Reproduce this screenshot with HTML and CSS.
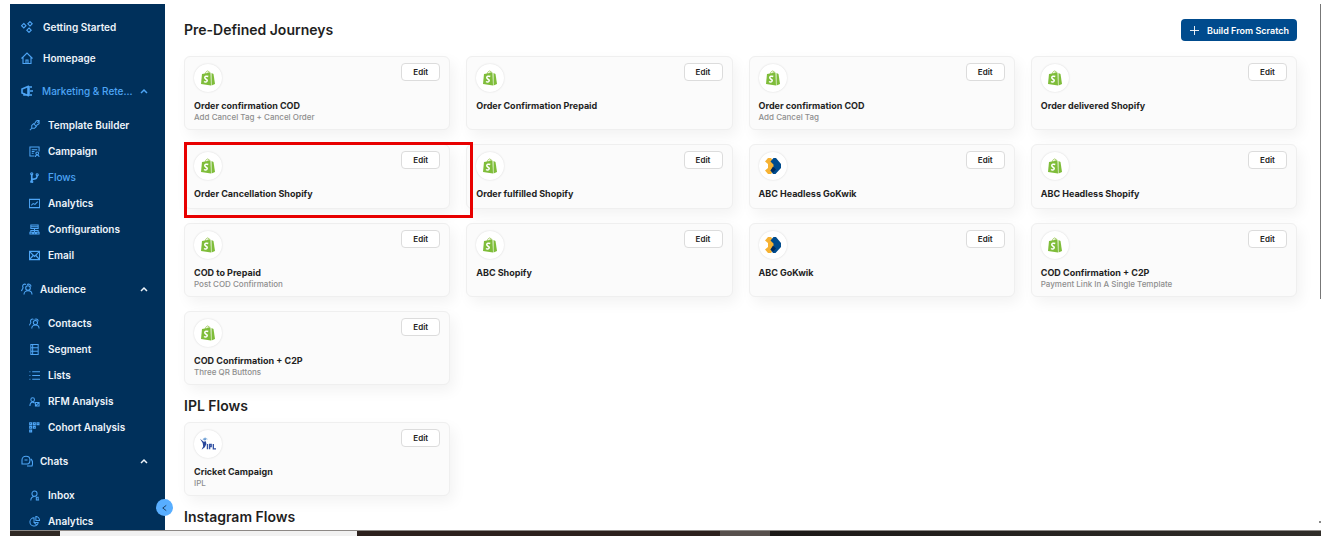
FILE: index.html
```html
<!DOCTYPE html>
<html lang="en">
<head>
<meta charset="utf-8">
<title>Pre-Defined Journeys</title>
<link rel="stylesheet" href="styles.css">
</head>
<body>
<svg class="sprite" aria-hidden="true">
  <symbol id="shopify" viewBox="0 0 28 32">
    <path fill="none" stroke="#a9cf6b" stroke-width="2" d="M8 9C9 4 12 1 14 2s3 3 3 7M12 9c1-4 3-6 5-5"/>
    <path fill="#7fbd3a" d="M2 8l17-3 1 26L0 28z"/>
    <path fill="#7fbd3a" d="M21 6l4 2 3 20-7 3z"/>
    <path fill="none" stroke="#fff" stroke-width="3" d="M14.500 13c-3-1.500-7-.5-7 2.500 0 3 5.500 3 5 6-.5 3-4.500 3-6.500 1.500"/>
  </symbol>
  <symbol id="gokwik" viewBox="0 0 32 32">
    <path fill="#f6b233" d="M6 0h6l6 8v17l-6 7H6l-6-7 6-5v-8L0 7z"/>
    <path fill="#004b8d" d="M17 0h5l10 12v8L21 32h-5l-5-7 6-6v-6l-6-6z"/>
    <path fill="#00295c" d="M16 17l6 6-6 6-5-4z"/>
  </symbol>
  <symbol id="ipl" viewBox="0 0 30 24">
    <circle cx="9" cy="3" r="2.500" fill="#6d9ed4"/>
    <path fill="none" stroke="#8db4dd" stroke-width="1.500" d="M5 4l5-3 4 2"/>
    <path fill="#27469b" d="M0 2l7 6 4-1 1 5-3 6-6 5 3-7-1-6z"/>
    <path fill="none" stroke="#3453a4" stroke-width="2.500" d="M14 12v10M18 22V13h3v4h-3M25 12v9h5"/>
  </symbol>
  <symbol id="up" viewBox="0 0 8 8"><path d="M1 6l3-3 3 3"/></symbol>
  <symbol id="diamonds" viewBox="0 0 12 12"><path d="M2.800 2.500l2.200 2.200-2.200 2.200L.6 4.700zM9 .6l2.200 2.200L9 5 6.800 2.800zM8 7l2.200 2.200L8 11.400 5.800 9.200z"/></symbol>
  <symbol id="home" viewBox="0 0 12 12"><path d="M.5 6.500L6 1l5.500 5.500M2 5.500v6h8v-6M5 11V8h2v3"/></symbol>
  <symbol id="horn" viewBox="0 0 12 12"><path stroke-width="1.600" d="M1 4v4l6 2.500v-9zM3 8v2h2M9 2h2M9 6h3M9 10h2M8 1v10"/></symbol>
  <symbol id="builder" viewBox="0 0 12 12"><path d="M1 11l2-2M3 9V6l2-2 3 3-2 2zM6 4l2-3 3-1v4L8 6M9 3l2-2"/></symbol>
  <symbol id="campaign" viewBox="0 0 12 12"><path d="M6 11H1V1h10v5M3 4h6M3 6h3M3 8h2M7 12c0-3 4-3 4 0"/><circle cx="9" cy="8" r="1.500"/></symbol>
  <symbol id="flow" viewBox="0 0 12 12"><path stroke-width="1.800" d="M3 2v9M3 8c5 0 6-1 6-5"/><circle cx="3" cy="2" r="1.200"/><circle cx="3" cy="10.500" r="1.200"/><circle cx="9" cy="3" r="1.200"/></symbol>
  <symbol id="chart" viewBox="0 0 12 12"><path d="M.5 1.500h11v9H.5zM2.500 8l2-2 2 1 3-3"/></symbol>
  <symbol id="config" viewBox="0 0 12 12"><path d="M2 1h8v4H2zM2 3h8M6 5v2M2 9V7h8v2M1 9h3v2H1zM5 9h2v2H5zM8 9h3v2H8zM6 7v2"/></symbol>
  <symbol id="mail" viewBox="0 0 12 12"><path stroke-width="1.300" d="M.5 1.500h11v9H.5zM.5 1.500L6 7l5.500-5.500M.5 10.500L4.500 6M11.500 10.500L7.500 6"/></symbol>
  <symbol id="people" viewBox="0 0 12 12"><circle cx="7" cy="5" r="2.300"/><path d="M3 11.500c0-5 8-5 8 0M5 1.500C3 .5 1 2 2 4.500 2.500 5 1 6 .5 8M6 1.500c2-1 4 0 4 2"/></symbol>
  <symbol id="segment" viewBox="0 0 12 12"><path d="M2 .5h8v11H2zM2 4h8M2 8h8M4 1v10"/></symbol>
  <symbol id="list" viewBox="0 0 12 12"><path d="M3.500 2H12M3.500 6H12M3.500 10H12M.5 2h1M.5 6h1M.5 10h1"/></symbol>
  <symbol id="rfm" viewBox="0 0 12 12"><circle cx="4" cy="4" r="2"/><path d="M1 11c0-5 4-5 5-3M7 7h4v4H7zM7 11l4-4"/></symbol>
  <symbol id="cohort" viewBox="0 0 12 12"><path stroke-width="1.300" d="M.8.8h2v2h-2zM4.800.8h2v2h-2zM8.800.8h2v2h-2zM.8 4.800h2v2h-2zM4.800 4.800h2v2h-2zM.8 8.800h2v2h-2z"/></symbol>
  <symbol id="chat" viewBox="0 0 12 12"><path d="M1 9V5c0-5 8-5 8 0s-3 4-8 4zM10 4c2 2 2 4 1 7H6M3.500 5h3"/></symbol>
  <symbol id="inbox" viewBox="0 0 12 12"><circle cx="6" cy="4" r="2.800"/><path d="M2 11.500C2 8 4 7 6 7M8 8h2v3H8zM8 11h3"/></symbol>
  <symbol id="pie" viewBox="0 0 12 12"><path d="M5.500 2a4.500 4.500 0 1 0 4.500 5H5.500zM7.500.5v4.500h4c0-3-2-4.500-4-4.500zM5.500 7l3 3"/></symbol>
</svg>

<div class="app">
  <aside class="sidebar">
    <nav class="menu">
      <a class="item" href="#"><svg class="icon"><use href="#diamonds"/></svg>Getting Started</a>
      <a class="item" href="#"><svg class="icon"><use href="#home"/></svg>Homepage</a>

      <button class="group active" type="button"><svg class="icon"><use href="#horn"/></svg><span class="group-label">Marketing &amp; Rete...</span><svg class="caret"><use href="#up"/></svg></button>
      <ul class="submenu">
        <li><a class="subitem" href="#"><svg class="icon small"><use href="#builder"/></svg>Template Builder</a></li>
        <li><a class="subitem" href="#"><svg class="icon small"><use href="#campaign"/></svg>Campaign</a></li>
        <li><a class="subitem active" href="#"><svg class="icon small"><use href="#flow"/></svg>Flows</a></li>
        <li><a class="subitem" href="#"><svg class="icon small"><use href="#chart"/></svg>Analytics</a></li>
        <li><a class="subitem" href="#"><svg class="icon small"><use href="#config"/></svg>Configurations</a></li>
        <li><a class="subitem" href="#"><svg class="icon small"><use href="#mail"/></svg>Email</a></li>
      </ul>

      <button class="group" type="button"><svg class="icon"><use href="#people"/></svg><span class="group-label">Audience</span><svg class="caret"><use href="#up"/></svg></button>
      <ul class="submenu">
        <li><a class="subitem" href="#"><svg class="icon small"><use href="#people"/></svg>Contacts</a></li>
        <li><a class="subitem" href="#"><svg class="icon small"><use href="#segment"/></svg>Segment</a></li>
        <li><a class="subitem" href="#"><svg class="icon small"><use href="#list"/></svg>Lists</a></li>
        <li><a class="subitem" href="#"><svg class="icon small"><use href="#rfm"/></svg>RFM Analysis</a></li>
        <li><a class="subitem" href="#"><svg class="icon small"><use href="#cohort"/></svg>Cohort Analysis</a></li>
      </ul>

      <button class="group" type="button"><svg class="icon"><use href="#chat"/></svg><span class="group-label">Chats</span><svg class="caret"><use href="#up"/></svg></button>
      <ul class="submenu">
        <li><a class="subitem" href="#"><svg class="icon small"><use href="#inbox"/></svg>Inbox</a></li>
        <li><a class="subitem" href="#"><svg class="icon small"><use href="#pie"/></svg>Analytics</a></li>
      </ul>
    </nav>
    <button class="collapse" type="button" aria-label="Collapse sidebar"><svg viewBox="0 0 8 8"><path d="M6 1L2 4l4 3"/></svg></button>
  </aside>

  <main class="main">
    <header class="top">
      <h1 class="heading">Pre-Defined Journeys</h1>
      <button class="build" type="button"><svg viewBox="0 0 10 10"><path d="M5 0v10M0 5h10"/></svg>Build From Scratch</button>
    </header>

    <section class="grid">
      <article class="card"><div class="card-top"><span class="logo"><svg><use href="#shopify"/></svg></span><button class="edit" type="button">Edit</button></div><h3 class="title">Order confirmation COD</h3><p class="sub">Add Cancel Tag + Cancel Order</p></article>
      <article class="card"><div class="card-top"><span class="logo"><svg><use href="#shopify"/></svg></span><button class="edit" type="button">Edit</button></div><h3 class="title">Order Confirmation Prepaid</h3></article>
      <article class="card"><div class="card-top"><span class="logo"><svg><use href="#shopify"/></svg></span><button class="edit" type="button">Edit</button></div><h3 class="title">Order confirmation COD</h3><p class="sub">Add Cancel Tag</p></article>
      <article class="card"><div class="card-top"><span class="logo"><svg><use href="#shopify"/></svg></span><button class="edit" type="button">Edit</button></div><h3 class="title">Order delivered Shopify</h3></article>

      <article class="card marked"><div class="card-top"><span class="logo"><svg><use href="#shopify"/></svg></span><button class="edit" type="button">Edit</button></div><h3 class="title">Order Cancellation Shopify</h3></article>
      <article class="card"><div class="card-top"><span class="logo"><svg><use href="#shopify"/></svg></span><button class="edit" type="button">Edit</button></div><h3 class="title">Order fulfilled Shopify</h3></article>
      <article class="card"><div class="card-top"><span class="logo"><svg><use href="#gokwik"/></svg></span><button class="edit" type="button">Edit</button></div><h3 class="title">ABC Headless GoKwik</h3></article>
      <article class="card"><div class="card-top"><span class="logo"><svg><use href="#shopify"/></svg></span><button class="edit" type="button">Edit</button></div><h3 class="title">ABC Headless Shopify</h3></article>

      <article class="card"><div class="card-top"><span class="logo"><svg><use href="#shopify"/></svg></span><button class="edit" type="button">Edit</button></div><h3 class="title">COD to Prepaid</h3><p class="sub">Post COD Confirmation</p></article>
      <article class="card"><div class="card-top"><span class="logo"><svg><use href="#shopify"/></svg></span><button class="edit" type="button">Edit</button></div><h3 class="title">ABC Shopify</h3></article>
      <article class="card"><div class="card-top"><span class="logo"><svg><use href="#gokwik"/></svg></span><button class="edit" type="button">Edit</button></div><h3 class="title">ABC GoKwik</h3></article>
      <article class="card"><div class="card-top"><span class="logo"><svg><use href="#shopify"/></svg></span><button class="edit" type="button">Edit</button></div><h3 class="title">COD Confirmation + C2P</h3><p class="sub">Payment Link In A Single Template</p></article>

      <article class="card"><div class="card-top"><span class="logo"><svg><use href="#shopify"/></svg></span><button class="edit" type="button">Edit</button></div><h3 class="title">COD Confirmation + C2P</h3><p class="sub">Three QR Buttons</p></article>
    </section>

    <h2 class="heading section-heading">IPL Flows</h2>
    <section class="grid">
      <article class="card"><div class="card-top"><span class="logo"><svg><use href="#ipl"/></svg></span><button class="edit" type="button">Edit</button></div><h3 class="title">Cricket Campaign</h3><p class="sub">IPL</p></article>
    </section>

    <h2 class="heading section-heading">Instagram Flows</h2>
    <div class="scroll-thumb"></div>
    <div class="scroll-arrow"></div>
  </main>
</div>
<footer class="taskbar"><span class="task-start"></span><span class="task-search"></span><span class="task-apps"></span><span class="task-current"></span><span class="task-rest"></span></footer>
</body>
</html>
```

FILE: styles.css
```css
* { box-sizing: border-box; }

body {
  margin: 0;
  height: 100vh;
  padding: 4px 0 7px 10px;
  display: flex;
  flex-direction: column;
  overflow: hidden;
  background: #fff;
  color: #1f1f1f;
  font-family: Inter, "Liberation Sans", sans-serif;
}

button { font-family: inherit; cursor: pointer; }
h1, h2, h3, p, ul { margin: 0; padding: 0; }
ul { list-style: none; }
.sprite { display: none; }

.app { flex: 1; min-height: 0; display: flex; }

/* Sidebar */
.sidebar {
  position: relative;
  z-index: 2;
  flex: 0 0 155px;
  min-width: 0;
  background: #00305b;
}
.menu { height: 100%; padding-top: 8px; overflow: hidden; }
.item, .group, .subitem {
  display: flex;
  align-items: center;
  color: #eef4fa;
  font-size: 10px;
  font-weight: 600;
  text-decoration: none;
}
.item { height: 31px; padding: 0 0 2px 11px; gap: 10px; }
.group {
  width: 100%;
  height: 34px;
  padding: 0 17px 0 11px;
  gap: 7px;
  border: 0;
  background: none;
  text-align: left;
}
.group.active { gap: 9px; }
.group-label { flex: 1; min-width: 0; white-space: nowrap; }
.submenu { padding: 4px 0; }
.subitem { height: 26px; padding-left: 19px; gap: 8px; }
.group.active, .subitem.active { color: #4ea5f5; font-weight: 500; }
.icon {
  width: 12px;
  height: 12px;
  flex: none;
  fill: none;
  stroke: #4ea5f5;
  stroke-width: 1.1;
}
.icon.small { width: 11px; height: 11px; }
.caret { width: 8px; height: 8px; flex: none; fill: none; stroke: currentColor; stroke-width: 1.5; }
.collapse {
  position: absolute;
  right: -8px;
  bottom: 14px;
  width: 17px;
  height: 17px;
  padding: 0;
  display: grid;
  place-items: center;
  border: 0;
  border-radius: 50%;
  background: #58aeff;
}
.collapse svg { width: 7px; height: 8px; fill: none; stroke: #12304f; stroke-width: 1; }

/* Content */
.main {
  position: relative;
  flex: 1;
  min-width: 0;
  padding: 15px 24px 0 19px;
  overflow: hidden;
}
.top { display: flex; align-items: center; justify-content: space-between; margin-bottom: 15px; }
.heading { font-size: 14px; line-height: 20px; font-weight: 600; }
.section-heading { margin: 11px 0 6px; }
.build {
  display: flex;
  align-items: center;
  gap: 8px;
  height: 22px;
  padding: 0 8px 0 9px;
  border: 0;
  border-radius: 4px;
  background: #004b8d;
  color: #fff;
  font-size: 9px;
  font-weight: 600;
}
.build svg { width: 9px; height: 9px; stroke: currentColor; }

.grid { display: grid; grid-template-columns: repeat(4, minmax(0, 1fr)); gap: 14px 16px; }
.card {
  position: relative;
  padding: 6px 9px 7px;
  border: 1px solid #efefef;
  border-radius: 6px;
  background: #fbfbfb;
  box-shadow: 4px 6px 14px rgba(0, 0, 0, 0.05);
}
.card-top { display: flex; align-items: flex-start; justify-content: space-between; margin-bottom: 6px; }
.logo {
  width: 28px;
  height: 28px;
  margin-top: 1px;
  display: grid;
  place-items: center;
  border-radius: 50%;
  background: #fff;
  box-shadow: 0 0 2px rgba(0, 0, 0, 0.15);
}
.logo svg { width: 16px; height: 16px; }
.edit {
  width: 39px;
  height: 18px;
  padding: 0;
  border: 1px solid #dcdcdc;
  border-radius: 4px;
  background: #fff;
  color: #222;
  font-size: 8px;
  font-weight: 600;
}
.title { font-size: 9px; line-height: 15px; font-weight: 700; }
.sub { color: #8e8e8e; font-size: 8px; line-height: 9px; font-weight: 500; }

.marked { z-index: 1; }
.marked::after {
  content: "";
  position: absolute;
  top: -3px;
  right: -24px;
  bottom: -10px;
  left: -1px;
  border: 3px solid #e80000;
}

.scroll-thumb { position: absolute; top: 0; right: 0; width: 1px; height: 56%; background: #777; }
.scroll-arrow {
  position: absolute;
  right: 0;
  bottom: 7px;
  width: 2px;
  height: 2px;
  background: #888;
}

/* Taskbar strip */
.taskbar { display: flex; height: 6px; border-top: 1px solid #8d8986; background: #211c19; }
.task-start { width: 50px; background: #302924; }
.task-search { width: 297px; background: #f1f1f1; }
.task-apps { width: 363px; background: #2c211d; }
.task-current { width: 50px; background: #57504d; }
.task-rest { flex: 1; background: linear-gradient(90deg, #1c1917, #302d29); }
```
